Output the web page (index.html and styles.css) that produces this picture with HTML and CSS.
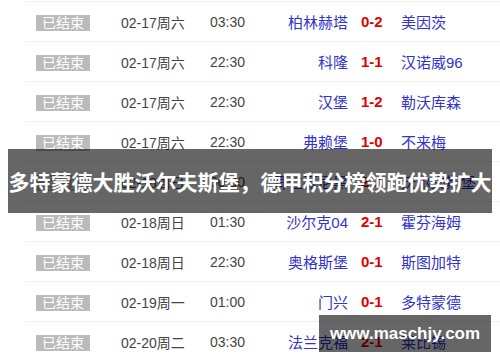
FILE: index.html
```html
<!DOCTYPE html>
<html lang="zh-CN">
<head>
<meta charset="utf-8">
<title>德甲赛程</title>
<link rel="stylesheet" href="styles.css">
</head>
<body>
<div class="page">
  <ul class="matches">
    <li class="row"><span class="badge">已结束</span><span class="date">02-17周六</span><span class="time">03:30</span><span class="home">柏林赫塔</span><span class="score">0-2</span><span class="away">美因茨</span></li>
    <li class="row"><span class="badge">已结束</span><span class="date">02-17周六</span><span class="time">22:30</span><span class="home">科隆</span><span class="score">1-1</span><span class="away">汉诺威96</span></li>
    <li class="row"><span class="badge">已结束</span><span class="date">02-17周六</span><span class="time">22:30</span><span class="home">汉堡</span><span class="score">1-2</span><span class="away">勒沃库森</span></li>
    <li class="row"><span class="badge">已结束</span><span class="date">02-17周六</span><span class="time">22:30</span><span class="home">弗赖堡</span><span class="score">1-0</span><span class="away">不来梅</span></li>
    <li class="row"><span class="badge">已结束</span><span class="date">02-18周日</span><span class="time">00:30</span><span class="home">拜仁慕尼黑</span><span class="score">2-1</span><span class="away">沃尔夫斯堡</span></li>
    <li class="row"><span class="badge">已结束</span><span class="date">02-18周日</span><span class="time">01:30</span><span class="home">沙尔克04</span><span class="score">2-1</span><span class="away">霍芬海姆</span></li>
    <li class="row"><span class="badge">已结束</span><span class="date">02-18周日</span><span class="time">22:30</span><span class="home">奥格斯堡</span><span class="score">0-1</span><span class="away">斯图加特</span></li>
    <li class="row"><span class="badge">已结束</span><span class="date">02-19周一</span><span class="time">01:00</span><span class="home">门兴</span><span class="score">0-1</span><span class="away">多特蒙德</span></li>
    <li class="row"><span class="badge">已结束</span><span class="date">02-20周二</span><span class="time">03:30</span><span class="home">法兰克福</span><span class="score">2-1</span><span class="away">莱比锡</span></li>
  </ul>
  <div class="headline">多特蒙德大胜沃尔夫斯堡，德甲积分榜领跑优势扩大</div>
  <div class="watermark">www.maschjy.com</div>
</div>
</body>
</html>
```

FILE: styles.css
```css
html, body {
  margin: 0;
  padding: 0;
  background: #fff;
}
body {
  font-family: "Liberation Sans", "Noto Sans CJK SC", sans-serif;
  font-size: 14px;
  color: #444;
  overflow: hidden;
}
.page {
  position: relative;
  width: 500px;
  height: 362px;
  overflow: hidden;
}
.matches {
  list-style: none;
  margin: 0;
  padding: 1px 0 0 25px;
}
.row {
  display: grid;
  grid-template-columns: 85px 89px 50px 88px 53px 1fr;
  align-items: center;
  height: 39px;
  border-top: 1px solid #eeeeee;
  padding-left: 11px;
  white-space: nowrap;
}
.badge {
  justify-self: start;
  width: 54px;
  height: 16px;
  line-height: 16px;
  background: #bbbbbb;
  color: #fff;
  text-align: center;
  font-size: 14px;
  margin-top: 2px;
}
.date, .time {
  color: #444;
  font-size: 14px;
}
.home {
  text-align: right;
  color: #3333cc;
  font-size: 15px;
}
.away {
  color: #3333cc;
  font-size: 15px;
}
.score {
  padding-left: 13px;
  color: #e00000;
  font-weight: bold;
  font-size: 15px;
}
.headline {
  position: absolute;
  left: 8px;
  top: 149px;
  width: 484px;
  height: 64px;
  line-height: 64px;
  background: rgba(0, 0, 0, 0.6);
  color: #fff;
  font-family: "Noto Sans CJK SC", sans-serif;
  font-weight: bold;
  font-size: 21px;
  text-align: center;
  white-space: nowrap;
}
.watermark {
  position: absolute;
  left: 319px;
  top: 315px;
  width: 172px;
  height: 37px;
  line-height: 37px;
  background: rgba(0, 0, 0, 0.6);
  color: #fff;
  font-family: "Liberation Sans", sans-serif;
  font-weight: bold;
  font-size: 17px;
  text-align: center;
}
```
